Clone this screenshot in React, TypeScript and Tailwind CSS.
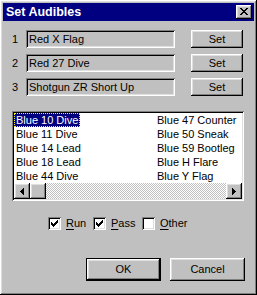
import React from 'react'

const raised =
  'shadow-[inset_-1px_-1px_0_#000,inset_1px_1px_0_#fff,inset_-2px_-2px_0_#808080,inset_2px_2px_0_#dfdfdf]'
const sunken =
  'shadow-[inset_1px_1px_0_#808080,inset_-1px_-1px_0_#fff,inset_2px_2px_0_#000,inset_-2px_-2px_0_#dfdfdf]'

const audibles = ['Red X Flag', 'Red 27 Dive', 'Shotgun ZR Short Up']

const plays = [
  ['Blue 10 Dive', 'Blue 11 Dive', 'Blue 14 Lead', 'Blue 18 Lead', 'Blue 44 Dive'],
  ['Blue 47 Counter', 'Blue 50 Sneak', 'Blue 59 Bootleg', 'Blue H Flare', 'Blue Y Flag'],
]

function CloseGlyph() {
  return (
    <svg width="8" height="7" viewBox="0 0 8 7" shapeRendering="crispEdges">
      <path
        d="M0 0h2v1H0zM6 0h2v1H6zM1 1h2v1H1zM5 1h2v1H5zM2 2h4v1H2zM3 3h2v1H3zM2 4h4v1H2zM1 5h2v1H1zM5 5h2v1H5zM0 6h2v1H0zM6 6h2v1H6z"
        fill="#000"
      />
    </svg>
  )
}

function Arrow({ dir }: { dir: 'left' | 'right' }) {
  return (
    <svg width="4" height="7" viewBox="0 0 4 7" shapeRendering="crispEdges">
      {dir === 'left' ? (
        <path d="M3 0h1v7H3zM2 1h1v5H2zM1 2h1v3H1zM0 3h1v1H0z" fill="#000" />
      ) : (
        <path d="M0 0h1v7H0zM1 1h1v5H1zM2 2h1v3H2zM3 3h1v1H3z" fill="#000" />
      )}
    </svg>
  )
}

function CheckMark() {
  return (
    <svg width="7" height="7" viewBox="0 0 7 7" shapeRendering="crispEdges">
      <path
        d="M6 0h1v1H6zM5 1h2v1H5zM0 2h1v1H0zM4 2h3v1H4zM0 3h2v1H0zM3 3h3v1H3zM0 4h5v1H0zM1 5h3v1H1zM2 6h1v1H2z"
        fill="#000"
      />
    </svg>
  )
}

function Check({ checked, label, hot, width }: { checked: boolean; label: string; hot: number; width: string }) {
  return (
    <div className={`flex items-center h-[13px] ${width}`}>
      <div className={`w-[13px] h-[13px] bg-white flex items-center justify-center ${sunken}`}>
        {checked && <CheckMark />}
      </div>
      <span className="ml-[5px] text-[11px] leading-[13px]">
        {label.slice(0, hot)}
        <span className="underline underline-offset-[2px]">{label[hot]}</span>
        {label.slice(hot + 1)}
      </span>
    </div>
  )
}

export default function App() {
  return (
    <div
      className={`w-[257px] h-[295px] bg-[#c0c0c0] p-[3px] flex flex-col text-black font-['Liberation_Sans',Arial,sans-serif] ${raised}`}
    >
      {/* Title bar */}
      <div className="h-[18px] bg-[#000080] flex items-center justify-between pl-[3px] pr-[2px]">
        <span className="text-white font-bold text-[12.5px] leading-none">Set Audibles</span>
        <div className={`w-[16px] h-[14px] bg-[#c0c0c0] flex items-center justify-center pr-[1px] pb-[1px] ${raised}`}>
          <CloseGlyph />
        </div>
      </div>

      {/* Audible rows */}
      <div className="mt-[9px] pl-[9px] flex flex-col gap-[6px]">
        {audibles.map((a, i) => (
          <div key={a} className="flex items-center h-[18px]">
            <span className="w-[14px] text-[11px]">{i + 1}</span>
            <div className={`w-[149px] h-[18px] flex items-center pl-[3px] text-[11px] ${sunken}`}>{a}</div>
            <button className={`ml-[16px] w-[52px] h-[18px] text-[11px] flex items-center justify-center ${raised}`}>
              Set
            </button>
          </div>
        ))}
      </div>

      {/* Play list */}
      <div className={`mt-[15px] ml-[9px] w-[232px] h-[90px] bg-white p-[2px] flex flex-col ${sunken}`}>
        <div className="flex h-[70px] overflow-hidden">
          {plays.map((col, c) => (
            <div key={c} className="w-[141px] shrink-0 flex flex-col">
              {col.map((p, r) => (
                <div key={p} className="h-[14px] flex items-center text-[11px] whitespace-nowrap">
                  {c === 0 && r === 0 ? (
                    <span className="h-[14px] px-[1px] flex items-center bg-[#000080] text-white border border-dotted border-[#ffff00]">
                      {p}
                    </span>
                  ) : (
                    <span className="pl-[2px]">{p}</span>
                  )}
                </div>
              ))}
            </div>
          ))}
        </div>
        <div className="flex h-[16px]">
          <div className={`w-[16px] h-[16px] bg-[#c0c0c0] flex items-center justify-center ${raised}`}>
            <Arrow dir="left" />
          </div>
          <div className={`w-[16px] h-[16px] bg-[#c0c0c0] ${raised}`} />
          <div className="flex-1 bg-[repeating-conic-gradient(#c0c0c0_0_25%,#fff_0_50%)] bg-size-[2px_2px]" />
          <div className={`w-[16px] h-[16px] bg-[#c0c0c0] flex items-center justify-center ${raised}`}>
            <Arrow dir="right" />
          </div>
        </div>
      </div>

      {/* Categories */}
      <div className="mt-[16px] ml-[45px] flex items-center">
        <Check checked label="Run" hot={0} width="w-[45px]" />
        <Check checked label="Pass" hot={0} width="w-[49px]" />
        <Check checked={false} label="Other" hot={0} width="w-[60px]" />
      </div>

      {/* Buttons */}
      <div className="mt-[28px] mr-[9px] flex justify-end gap-[9px]">
        <button className="w-[75px] h-[23px] border border-black">
          <div className={`w-full h-full flex items-center justify-center text-[11px] ${raised}`}>OK</div>
        </button>
        <button className={`w-[75px] h-[23px] flex items-center justify-center text-[11px] ${raised}`}>Cancel</button>
      </div>
    </div>
  )
}
